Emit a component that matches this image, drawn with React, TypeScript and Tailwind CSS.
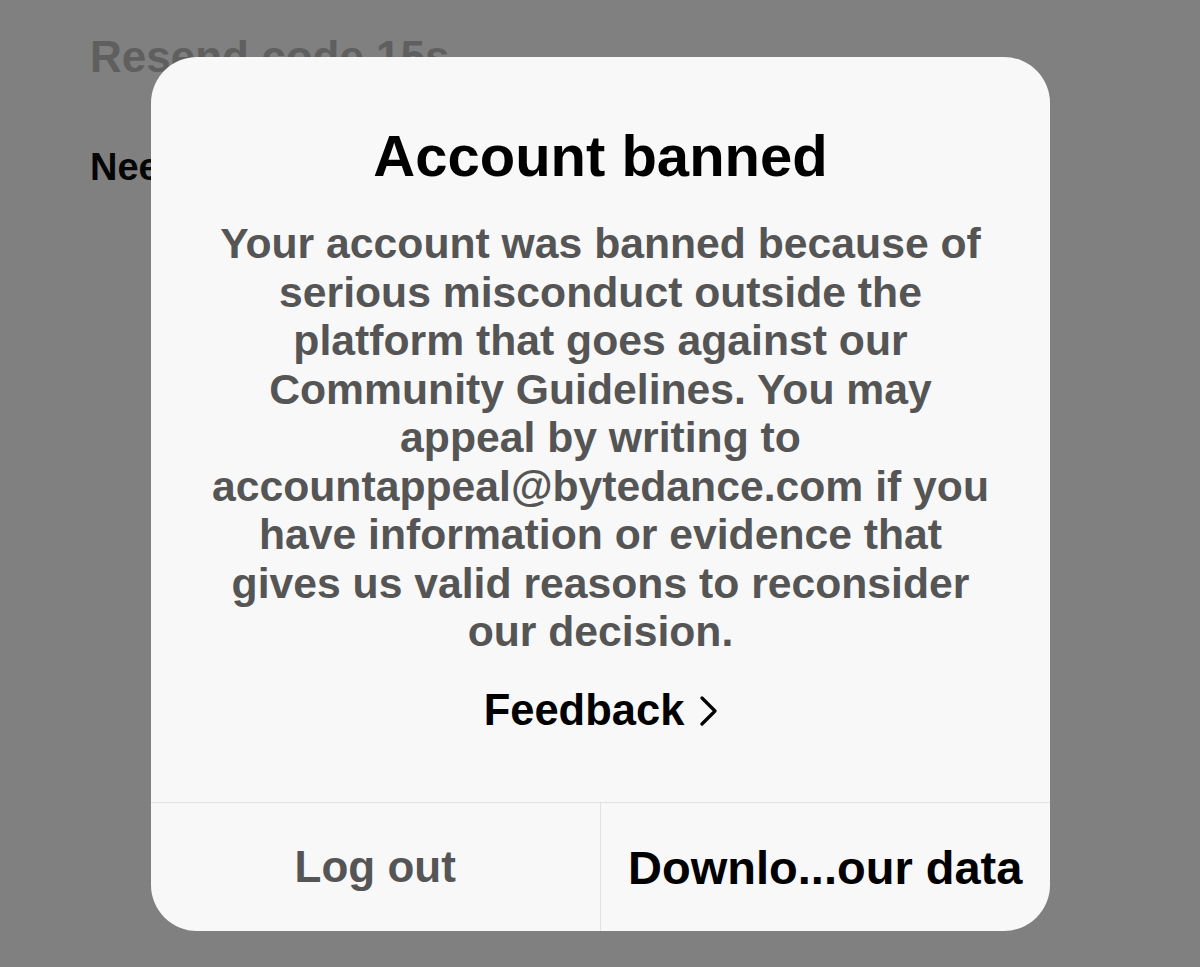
import React from "react";

export default function App() {
  const font = { fontFamily: '"Liberation Sans", Arial, sans-serif' };
  return (
    <div
      className="relative w-[1200px] h-[967px] overflow-hidden bg-[#808080]"
      style={font}
    >
      <div className="pl-[90px] pt-[35px] flex flex-col">
        <div className="text-[44px] leading-none font-bold text-[#5f5f5f] whitespace-nowrap">
          Resend code 15s
        </div>
        <div className="mt-[69px] text-[38px] leading-none font-bold text-[#050505] whitespace-nowrap">
          Need help?
        </div>
      </div>

      <div className="absolute left-[151px] top-[57px] w-[899px] h-[874px] rounded-[46px] bg-[#f8f8f8] flex flex-col overflow-hidden">
        <div className="pt-[70px] flex flex-col items-center">
          <h1 className="text-[58px] leading-none font-bold text-black whitespace-nowrap">
            Account banned
          </h1>
          <p className="mt-[34px] text-[42.7px] leading-[48.5px] font-bold text-[#555555] text-center whitespace-nowrap">
            Your account was banned because of
            <br />
            serious misconduct outside the
            <br />
            platform that goes against our
            <br />
            Community Guidelines. You may
            <br />
            appeal by writing to
            <br />
            accountappeal@bytedance.com if you
            <br />
            have information or evidence that
            <br />
            gives us valid reasons to reconsider
            <br />
            our decision.
          </p>
          <div className="mt-[31px] h-[48px] flex items-center gap-[15px]">
            <span className="text-[43.5px] leading-none font-bold text-black">
              Feedback
            </span>
            <svg width="18" height="30" viewBox="0 0 18 30" fill="none">
              <path
                d="M3 2 L16 15 L3 28"
                stroke="#000"
                strokeWidth="3.2"
                strokeLinecap="round"
                strokeLinejoin="round"
              />
            </svg>
          </div>
        </div>
        <div className="mt-auto h-[129px] border-t border-[#e2e2e2] grid grid-cols-2">
          <div className="flex items-center justify-center border-r border-[#e2e2e2]">
            <span className="text-[44px] leading-none font-bold text-[#555555] whitespace-nowrap">
              Log out
            </span>
          </div>
          <div className="flex items-center justify-center">
            <span className="text-[47px] leading-none font-bold text-black whitespace-nowrap">
              Downlo...our data
            </span>
          </div>
        </div>
      </div>
    </div>
  );
}
